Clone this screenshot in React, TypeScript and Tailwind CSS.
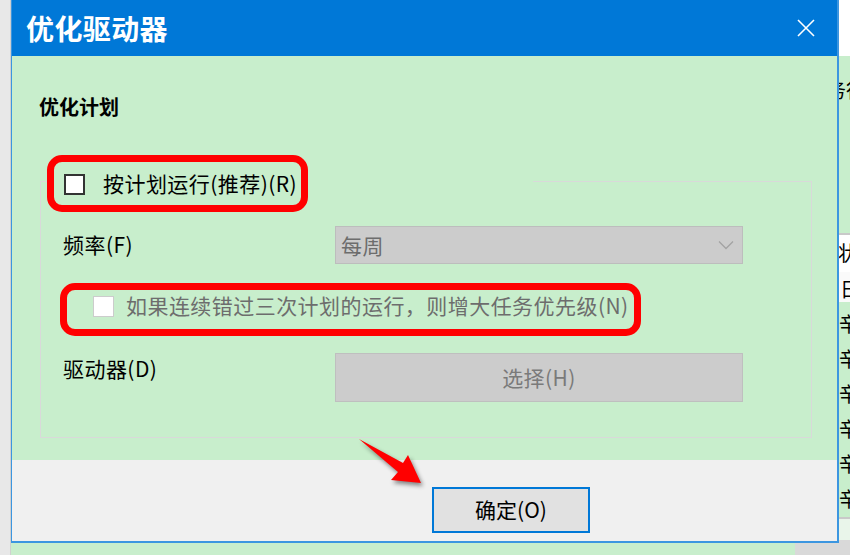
const cjk = { fontFamily: '"Noto Sans CJK SC", "Noto Sans", sans-serif' };

function CloseIcon() {
  return (
    <svg width="18" height="18" viewBox="0 0 18 18" className="text-white">
      <path d="M1 1 L17 17 M17 1 L1 17" stroke="currentColor" strokeWidth="1.6" fill="none" />
    </svg>
  );
}

function Chevron() {
  return (
    <svg width="16" height="10" viewBox="0 0 16 10">
      <path d="M1 1.5 L8 8.5 L15 1.5" stroke="#a3a3a3" strokeWidth="1.3" fill="none" />
    </svg>
  );
}

function RightStrip() {
  // sliver of the window behind the dialog
  return (
    <div className="w-[11px] h-full flex flex-col overflow-hidden text-[20px] leading-[24px] text-black whitespace-nowrap">
      <div className="h-[56px] bg-white" />
      <div className="h-[177px] pt-[22px]">
        <div className="ml-[-13px]">务行</div>
      </div>
      <div className="h-[39px] bg-white border-t-2 border-[#c9c9c9] pt-[6px]">
        <div className="ml-[-1px]">状</div>
      </div>
      <div className="h-[30px] bg-[#fafafa] pt-[5px]">
        <div className="ml-[1px]">日</div>
      </div>
      <div className="flex flex-col pt-[4px]">
        {[0, 1, 2, 3, 4, 5].map((i) => (
          <div key={i} className="h-[35px] leading-[35px]">
            辛
          </div>
        ))}
      </div>
      <div className="mt-[1px] h-[23px] border-t-2 border-[#c9c9c9] bg-[#e9f5ea]" />
      <div className="flex-1 bg-[#d9d9d9]" />
    </div>
  );
}

export default function App() {
  return (
    <div className="relative w-[850px] h-[555px] overflow-hidden flex bg-[#c8eecc]" style={cjk}>
      <div className="w-[11px] h-full bg-[#e8e8e8] border-r border-[#d0d0d0]" />

      <div className="w-[828px] h-full flex flex-col">
        <div className="h-[543px] flex flex-col border-l border-r-2 border-b-2 border-[#3c96e0]">
          <div className="h-[56px] bg-[#0078d7] flex items-center justify-between">
            <span className="pl-[14px] text-[28px] font-bold text-white leading-[32px] tracking-[0.4px]">优化驱动器</span>
            <div className="w-[62px] h-full flex items-center justify-center">
              <CloseIcon />
            </div>
          </div>

          <div className="h-[404px] bg-[#c8eecc] flex flex-col">
            <div className="mt-[41px] pl-[27px] text-[20px] font-bold leading-[20px] text-black">优化计划</div>

            <div className="relative mt-[64px] ml-[28px] w-[772px] border border-[#d9d9d9] pt-[44px] pl-[22px] pb-[35px] tracking-[0.45px]">
              <div className="absolute left-[6px] top-[-10px] w-[486px] h-[24px] bg-[#c8eecc] flex items-center">
                <div className="ml-[17px] w-[21px] h-[21px] bg-white border-2 border-[#333333]" />
                <span className="ml-[18px] mt-[-3px] text-[21px] leading-[24px] text-black">按计划运行(推荐)(R)</span>
              </div>

              <div className="h-[38px] flex items-center">
                <span className="w-[272px] mt-[-3px] text-[21px] leading-[24px] text-black">频率(F)</span>
                <div className="w-[408px] h-full bg-[#cccccc] border border-[#bdbdbd] flex items-center justify-between pl-[5px] pr-[8px]">
                  <span className="text-[21px] leading-[24px] text-[#6d6d6d]">每周</span>
                  <Chevron />
                </div>
              </div>

              <div className="mt-[30px] h-[24px] flex items-center pl-[30px]">
                <div className="w-[21px] h-[21px] bg-white border border-[#cccccc]" />
                <span className="ml-[12px] mt-[-2px] text-[21px] leading-[24px] text-[#6d6d6d]">
                  如果连续错过三次计划的运行，则增大任务优先级(N)
                </span>
              </div>

              <div className="mt-[35px] h-[49px] flex items-start">
                <span className="w-[272px] pt-[3px] text-[21px] leading-[24px] text-black">驱动器(D)</span>
                <div className="w-[408px] h-full bg-[#cccccc] border border-[#bfbfbf] flex items-center justify-center text-[21px] text-[#7a7a7a]">
                  选择(H)
                </div>
              </div>
            </div>
          </div>

          <div className="h-[81px] bg-[#f0f0f0] pt-[27px] pl-[420px]">
            <div className="w-[158px] h-[46px] border-2 border-[#0078d7] bg-[#e1e1e1] flex items-center justify-center text-[21px] text-black">
              确定(O)
            </div>
          </div>
        </div>
        <div className="flex-1 flex">
          <div className="flex-1" />
          <div className="w-[44px] bg-[#d9d9d9]" />
        </div>
      </div>

      <RightStrip />

      {/* annotations */}
      <div className="absolute left-[47px] top-[155px] w-[261px] h-[57px] border-[7px] border-[#ff0000] rounded-[15px]" />
      <div className="absolute left-[60px] top-[283px] w-[581px] h-[53px] border-[7px] border-[#ff0000] rounded-[15px]" />
      <svg
        className="absolute left-[350px] top-[430px] drop-shadow-[2px_3px_2px_rgba(0,0,0,0.45)]"
        width="80"
        height="62"
        viewBox="0 0 80 62"
      >
        <polygon points="9,9 53,33 58,25 71,53 41,50 48,42" fill="#ff0000" />
      </svg>
    </div>
  );
}
